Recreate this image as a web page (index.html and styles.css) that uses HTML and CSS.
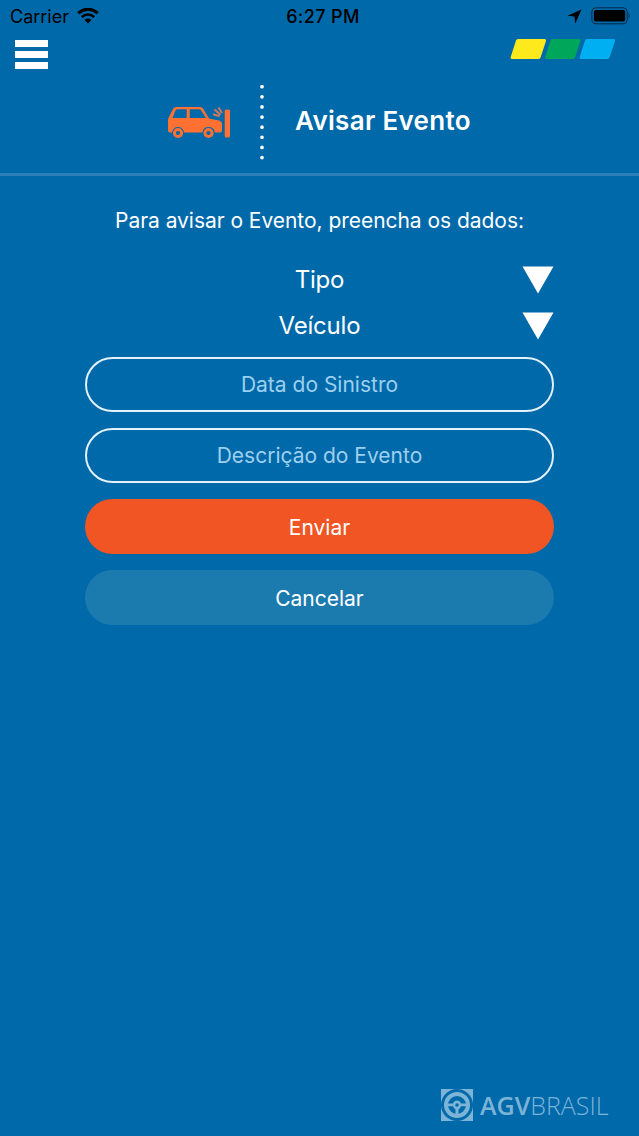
FILE: index.html
```html
<!DOCTYPE html>
<html lang="pt-BR">
<head>
    <meta charset="UTF-8">
    <title>Avisar Evento</title>
    <meta name="viewport" content="width=device-width, initial-scale=1.0">
    <link rel="stylesheet" href="styles.css">
</head>
<body>
    <header class="header">
        <div class="status-bar">
            <div class="status-left">
                <span class="carrier">Carrier</span>
                <svg class="wifi" width="22" height="16" viewBox="0 0 22 16">
                    <path d="M1.2 5.2Q11 -3 20.8 5.2" fill="none" stroke="#000" stroke-width="3"/>
                    <path d="M4.8 9Q11 4 17.2 9" fill="none" stroke="#000" stroke-width="2.6"/>
                    <path d="M7.6 12Q11 9.2 14.4 12L11 15.4Z"/>
                </svg>
            </div>
            <span class="clock">6:27 PM</span>
            <div class="status-right">
                <svg width="15" height="15" viewBox="0 0 15 15">
                    <path d="M14.5 0.5L8.3 14.5L7.4 7.6L0.5 6.8Z"/>
                </svg>
                <svg width="40" height="18" viewBox="0 0 40 18">
                    <rect x="0.8" y="0.8" width="35.4" height="16" rx="4" fill="none" stroke="#002a48" stroke-width="1"/>
                    <rect x="2.8" y="3" width="31.4" height="11.6" rx="2"/>
                    <path d="M37.6 5.8Q39.8 8.8 37.6 11.8Z" fill="#002a48"/>
                </svg>
            </div>
        </div>

        <nav class="nav">
            <button class="menu" aria-label="Menu">
                <span></span>
                <span></span>
                <span></span>
            </button>
            <svg class="brand" width="106" height="22" viewBox="0 0 106 22">
                <path d="M8 1H34.5Q36.500 1 36 3L30.500 19.500Q30 21 28 21H2Q0 21 0.700 19L6 2.500Q6.500 1 8 1Z" fill="#fee91d"/>
                <path d="M42.500 1H69Q71 1 70.500 3L65 19.500Q64.500 21 62.500 21H36.500Q34.500 21 35.200 19L40.500 2.500Q41 1 42.500 1Z" fill="#00a65a"/>
                <path d="M77 1H103.500Q105.500 1 105 3L99.500 19.500Q99 21 97 21H71Q69 21 69.700 19L75 2.500Q75.500 1 77 1Z" fill="#00aff2"/>
            </svg>
        </nav>

        <div class="title-row">
            <svg class="car" width="63" height="33" viewBox="0 0 63 33">
                <path fill="#ff7133" fill-rule="evenodd" d="M8.500 1H32Q34 1 35 2.500L41 12.500L51 14.500Q54 15.500 54 18V24Q54 26.500 52 26.500H47Q46 21 40.500 21T34.500 26.500H16Q15 21 10 21T4 26.500H2Q0 26.500 0 24V14Q0 12.500 1 11L5 3Q6 1 8.500 1ZM9.500 3.200Q8 3.200 7.500 4.500L4.500 12H18.700V3.200ZM21.700 3.200V12H38L33 4.200Q32.300 3.200 31 3.200Z"/>
                <circle cx="10" cy="27" r="3.600" fill="none" stroke="#ff7133" stroke-width="3"/>
                <circle cx="40.500" cy="27" r="3.600" fill="none" stroke="#ff7133" stroke-width="3"/>
                <rect x="56.700" y="3.500" width="5.300" height="28" rx="1.500" fill="#ff7133"/>
                <path d="M45 8.200L51.500 10.300M46.500 3.500L52.500 8.800M50.500 1.500L54 7" fill="none" stroke="#d3785a" stroke-width="2"/>
            </svg>
            <svg class="dots" width="6" height="76" viewBox="0 0 6 76">
                <path d="M3 1.700V73" stroke="#fff" stroke-width="3.700" stroke-linecap="round" stroke-dasharray="0 10.120"/>
            </svg>
            <h1>Avisar Evento</h1>
        </div>
    </header>

    <main class="content">
        <p class="intro">Para avisar o Evento, preencha os dados:</p>
        <div class="select">
            <span class="tipo">Tipo</span>
            <svg class="arrow" width="32" height="28" viewBox="0 0 32 28"><path d="M0.500 0.500H31.500L16 27.500Z" fill="#fff"/></svg>
        </div>
        <div class="select">
            <span class="veiculo">Veículo</span>
            <svg class="arrow" width="32" height="28" viewBox="0 0 32 28"><path d="M0.500 0.500H31.500L16 27.500Z" fill="#fff"/></svg>
        </div>
        <form class="form">
            <input class="field" type="text" placeholder="Data do Sinistro">
            <input class="field" type="text" placeholder="Descrição do Evento">
            <button class="btn send" type="button">Enviar</button>
            <button class="btn cancel" type="button">Cancelar</button>
        </form>
    </main>

    <footer class="footer">
        <svg width="32" height="32" viewBox="0 0 32 32">
            <rect width="32" height="32" fill="#7cb4d7"/>
            <circle cx="16" cy="16" r="16" fill="#0069aa"/>
            <circle cx="16" cy="16" r="11" fill="none" stroke="#7cb4d7" stroke-width="4"/>
            <path d="M6 14.500H12Q13 11.500 16 11.500T20 14.500H26V17.300H20Q19 20 17.500 20.500V27H14.500V20.500Q13 20 12 17.300H6Z" fill="#7cb4d7"/>
            <circle cx="16" cy="16" r="1.700" fill="#0069aa"/>
        </svg>
        <div class="logo-text"><b>AGV</b><span>BRASIL</span></div>
    </footer>
</body>
</html>
```

FILE: styles.css
```css
* {
    box-sizing: border-box;
}

body {
    margin: 0;
    height: 1136px;
    display: flex;
    flex-direction: column;
    overflow: hidden;
    background-color: #0069aa;
    color: #fff;
    font-family: Inter, "Liberation Sans", sans-serif;
}

svg {
    display: block;
    flex: none;
}

.header {
    height: 176px;
    border-bottom: 3px solid #2c80b7;
}

/* Status bar */
.status-bar {
    height: 32px;
    padding: 0 8px 0 10px;
    display: grid;
    grid-template-columns: 1fr auto 1fr;
    align-items: center;
    color: #000;
    font-size: 18px;
}

.status-left {
    display: flex;
    align-items: center;
    gap: 8px;
}

.carrier {
    letter-spacing: 0;
}

.clock {
    font-weight: 500;
    padding-left: 5px;
    letter-spacing: 0.4px;
}

.status-right {
    display: flex;
    align-items: center;
    justify-content: flex-end;
    gap: 9px;
}

/* Menu and brand colours */
.nav {
    height: 53px;
    padding: 6px 23px 0 15px;
    display: flex;
    justify-content: space-between;
    align-items: flex-start;
}

.menu {
    width: 33px;
    padding: 2px 0 0;
    border: none;
    background: none;
    display: flex;
    flex-direction: column;
    gap: 4px;
    cursor: pointer;
}

.menu span {
    height: 7px;
    background-color: #fff;
}

/* Page title */
.title-row {
    display: flex;
    padding-left: 168px;
}

.car {
    margin-top: 21px;
}

.dots {
    margin-left: 28px;
}

h1 {
    margin: 19px 0 0 30px;
    font-size: 26px;
    line-height: 34px;
    font-weight: 600;
    letter-spacing: 0.3px;
}

.content {
    width: 469px;
    margin: 0 auto;
    padding-top: 31px;
}

.intro {
    margin: 0 0 21px;
    font-size: 21px;
    line-height: 28px;
    letter-spacing: -0.04px;
    text-align: center;
    white-space: nowrap;
}

.select {
    height: 46px;
    display: grid;
    grid-template-columns: 32px 1fr 32px;
    align-items: center;
    text-align: center;
    font-size: 24px;
    letter-spacing: -0.2px;
}

.select span {
    grid-column: 2;
}

.arrow {
    margin-top: 1px;
}

.form {
    margin-top: 9px;
    display: flex;
    flex-direction: column;
    gap: 16px;
}

.field,
.btn {
    width: 100%;
    height: 55px;
    padding: 0;
    border-radius: 28px;
    font-family: inherit;
    font-size: 21px;
    text-align: center;
    color: #fff;
}

.field {
    border: 2px solid #e2f1fa;
    background: transparent;
}

.field::placeholder {
    color: #9dd0ef;
    opacity: 1;
}

.btn {
    padding-top: 1px;
    border: none;
    cursor: pointer;
}

.send {
    background-color: #f15524;
}

.cancel {
    background-color: #1c7bae;
}

/* Logo at the bottom */
.footer {
    margin-top: auto;
    padding: 0 31px 15px 0;
    display: flex;
    justify-content: flex-end;
    align-items: center;
    gap: 7px;
    color: #7cb4d7;
}

.logo-text {
    width: 128px;
    font-family: "Open Sans", sans-serif;
    font-size: 25px;
    line-height: 32px;
    white-space: nowrap;
}

.logo-text b {
    font-weight: 600;
}

.logo-text span {
    font-weight: 300;
}
```
